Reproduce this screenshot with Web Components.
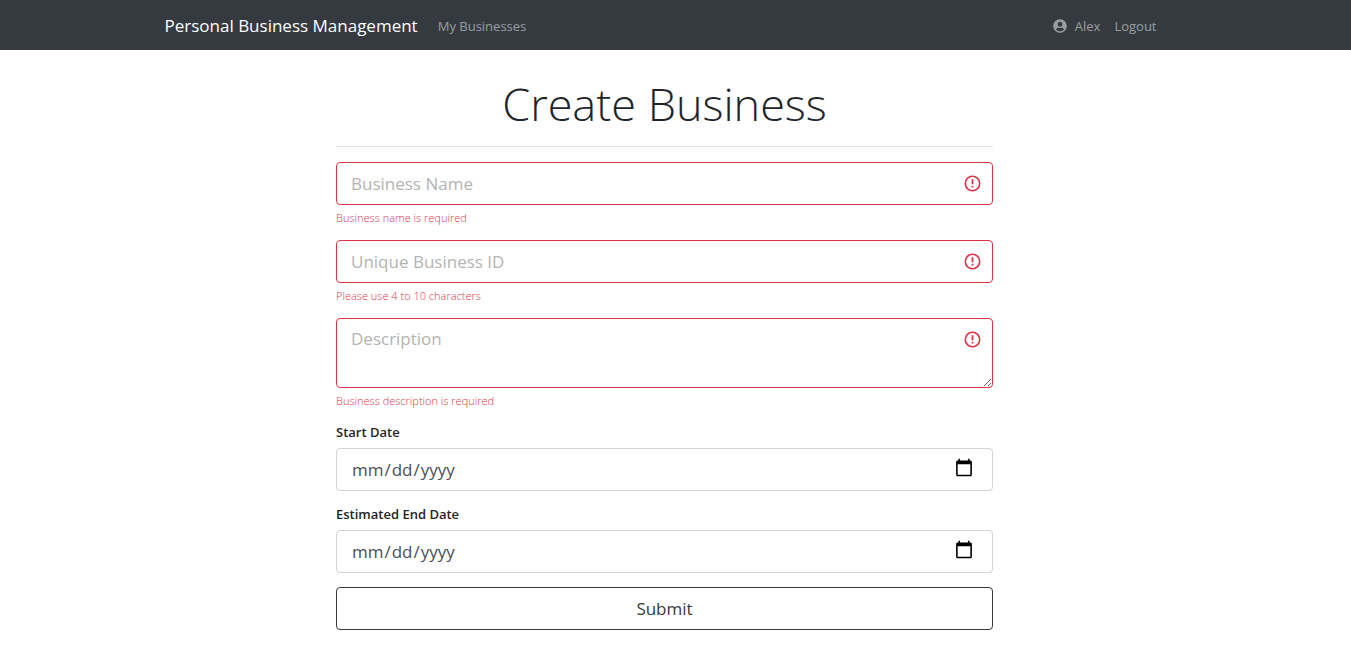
<!DOCTYPE html>
<html lang="en">
<head>
<meta charset="utf-8">
<title>Create Business</title>
<style>
body { margin: 0; background: #fff; color: #212529; font: 400 14px/21px "Open Sans", "Noto Sans", sans-serif; }
</style>
</head>
<body>
<app-shell>
  <nav-bar slot="nav"></nav-bar>
  <business-form></business-form>
</app-shell>

<script>
class BaseElement extends HTMLElement {
  render(html) {
    const template = document.createElement('template');
    template.innerHTML = '<style>*{box-sizing:border-box}</style>' + html;
    this.attachShadow({ mode: 'open' }).append(template.content.cloneNode(true));
  }
}

customElements.define('app-shell', class extends BaseElement {
  connectedCallback() {
    this.render(`
      <style>
        :host { display: block; }
        main { padding: 24px 22px 16px 0; }
      </style>
      <slot name="nav"></slot>
      <main><slot></slot></main>`);
  }
});

customElements.define('nav-bar', class extends BaseElement {
  connectedCallback() {
    this.render(`
      <style>
        :host { display: block; background: #343a40; padding-right: 22px; }
        nav { display: flex; align-items: center; max-width: 1000px; height: 50px; margin: 0 auto; padding: 2px 8px 0 0; }
        a { color: rgba(255,255,255,.5); text-decoration: none; font-size: 13px; line-height: 24px; font-weight: 500; }
        .brand { color: #fff; font-size: 17px; font-weight: 400; margin-right: 20px; }
        .links { display: flex; gap: 14px; margin-left: auto; }
        .user { display: flex; align-items: center; gap: 8px; }
        svg { display: block; width: 14px; height: 14px; }
      </style>
      <nav>
        <a class="brand" href="#">Personal Business Management</a>
        <a href="#">My Businesses</a>
        <div class="links">
          <a class="user" href="#">
            <svg viewBox="0 0 496 512" fill="currentColor" aria-hidden="true"><path d="M248 8C111 8 0 119 0 256s111 248 248 248 248-111 248-248S385 8 248 8zm0 96c48.600 0 88 39.400 88 88s-39.400 88-88 88-88-39.400-88-88 39.400-88 88-88zm0 344c-58.700 0-111.300-26.600-146.500-68.200 18.800-35.400 55.600-59.800 98.500-59.800 2.400 0 4.800.4 7.100 1.100 13 4.200 26.600 6.900 40.900 6.900 14.300 0 28-2.700 40.900-6.900 2.300-.7 4.700-1.100 7.100-1.100 42.900 0 79.700 24.400 98.500 59.800C359.300 421.400 306.700 448 248 448z"/></svg>
            <span>Alex</span></a>
          <a href="#">Logout</a>
        </div>
      </nav>`);
  }
});

customElements.define('form-field', class extends BaseElement {
  connectedCallback() {
    const type = this.getAttribute('type') || 'text';
    const label = this.getAttribute('label');
    const error = this.getAttribute('error');
    let control;
    if (type === 'textarea') control = `<textarea id="c" class="invalid" placeholder="${label}" aria-label="${label}"></textarea>`;
    else if (type === 'date') control = `<input id="c" type="date">`;
    else control = `<input id="c" class="invalid" type="text" placeholder="${label}" aria-label="${label}">`;
    this.render(`
      <style>
        :host { display: block; }
        label { display: block; font-weight: 600; font-size: 13px; line-height: 20px; margin-bottom: 6px; }
        .box { position: relative; }
        input, textarea {
          display: block; width: 100%; height: 43px; margin: 0; padding: 7px 14px;
          border: 1px solid #ced4da; border-radius: 4px; background: #fff;
          color: #495057; font: 400 17px/26px "Open Sans", "Noto Sans", sans-serif;
        }
        input[type=date] { padding-right: 18px; }
        input::-webkit-calendar-picker-indicator { width: 20px; height: 20px; padding: 0; margin-bottom: 3px; }
        textarea { height: 70px; resize: vertical; }
        .invalid { border-color: #dc3545; padding-right: 44px; }
        ::placeholder { color: #b4b4b4; opacity: 1; }
        svg { position: absolute; top: 13px; right: 12px; width: 17px; height: 17px; pointer-events: none; }
        .error { color: #dc3545; font-weight: 300; font-size: 11px; line-height: 17px; margin-top: 4px; }
      </style>
      ${type === 'date' ? `<label for="c">${label}</label>` : ''}
      <div class="box">${control}
        ${error ? `<svg viewBox="0 0 17 17" fill="none" stroke="#dc3545" aria-hidden="true"><circle cx="8.500" cy="8.500" r="7.200" stroke-width="1.600"/><path d="M8.500 4.300V9.300M8.500 10.800V12.600" stroke-width="1.800"/></svg>` : ''}
      </div>
      ${error ? `<div class="error">${error}</div>` : ''}`);
  }
});

customElements.define('submit-button', class extends BaseElement {
  connectedCallback() {
    this.render(`
      <style>
        :host { display: block; }
        button { display: block; width: 100%; height: 43px; padding: 0 14px; border: 1px solid #343a40; border-radius: 4px;
          background: #fff; color: #343a40; font: 400 17px/26px "Open Sans", "Noto Sans", sans-serif; }
      </style>
      <button type="submit"><slot></slot></button>`);
  }
});

customElements.define('business-form', class extends BaseElement {
  connectedCallback() {
    this.render(`
      <style>
        :host { display: block; max-width: 657px; margin: 0 auto; }
        h1 { margin: 0 0 12px; font-size: 45px; line-height: 60px; font-weight: 300; text-align: center; }
        hr { margin: 0 0 15px; border: 0; border-top: 1px solid #e5e5e5; }
        form { display: flex; flex-direction: column; gap: 14px; }
        .dates { display: flex; flex-direction: column; gap: 13px; margin-top: -1px; }
      </style>
      <h1>Create Business</h1>
      <hr>
      <form novalidate>
        <form-field label="Business Name" error="Business name is required"></form-field>
        <form-field label="Unique Business ID" error="Please use 4 to 10 characters"></form-field>
        <form-field type="textarea" label="Description" error="Business description is required"></form-field>
        <div class="dates">
          <form-field type="date" label="Start Date"></form-field>
          <form-field type="date" label="Estimated End Date"></form-field>
        </div>
        <submit-button>Submit</submit-button>
      </form>`);
  }
});
</script>
</body>
</html>
